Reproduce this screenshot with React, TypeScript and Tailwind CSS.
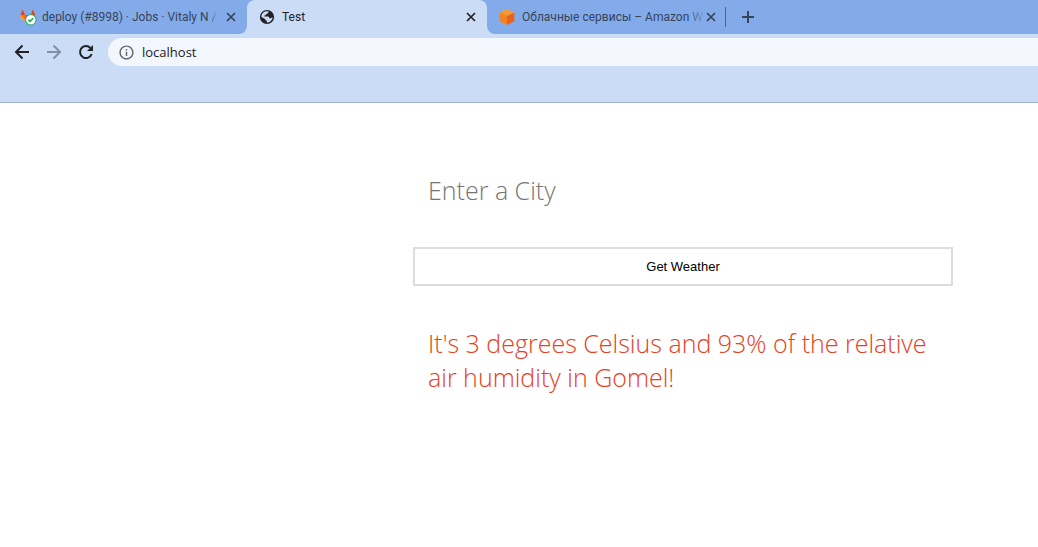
import { useState, type ReactNode } from "react";
import { MdInfoOutline } from "react-icons/md";

function GitlabIcon() {
  return (
    <svg width="18" height="18" viewBox="0 0 18 18" aria-hidden="true" className="-mr-0.5">
      <path d="M3.600 1.600 1.200 8.600 9 15 6 7z" fill="#fc6d26" />
      <path d="M14 1.600 16.600 8.600 9 15 11.800 7z" fill="#fc6d26" />
      <path d="M6 7h6L9 15z" fill="#e24329" />
      <path d="M3.600 1.600 6 7H1.800zM14 1.600 16.200 7h-4.400z" fill="#e24329" />
      <path d="M1.800 7 1.200 9.600 9 15z" fill="#fca326" />
      <circle cx="11.800" cy="11.800" r="5.200" fill="#fff" stroke="#1aaa55" strokeWidth="1" />
      <path d="m9.400 11.800 1.700 1.600 3.100-3.200" fill="none" stroke="#1aaa55" strokeWidth="1.600" />
    </svg>
  );
}

function GlobeIcon() {
  return (
    <svg width="16" height="16" viewBox="0 0 16 16" aria-hidden="true">
      <circle cx="8" cy="8" r="7.1" fill="#202124" />
      <path
        d="M9.600 2.400C9.600 4 8.700 4.700 7.300 4.700 7.200 5.900 6.500 6.500 5.300 6.500v1.100h3.400c1.100 0 1.600.7 1.600 1.700h1.200c.6 0 .9-.4 1-.9h1.100C13.300 11 11 13.500 7.800 13.600V11.600c-1.100 0-1.700-.7-1.700-1.700L2.400 8C2.300 5 4.600 2.300 8 2.300z"
        fill="#cbdcf6"
      />
    </svg>
  );
}

function CubeIcon() {
  return (
    <svg width="16" height="16" viewBox="0 0 16 16" aria-hidden="true">
      <path d="M8 0.3 15.3 3.6 8 7.1 0.7 3.6z" fill="#fb9a2c" />
      <path d="M0.7 3.6 8 7.1v8.8L0.7 12.2z" fill="#f58220" />
      <path d="M15.3 3.6 8 7.1v8.8l7.3-3.7z" fill="#e9631c" />
    </svg>
  );
}

function ReloadIcon() {
  return (
    <svg width="20" height="20" viewBox="0 0 20 20" aria-hidden="true">
      <path d="M15.700 12a6 6 0 1 1-1.300-6.100" fill="none" stroke="currentColor" strokeWidth="2" />
      <path d="M17 3v6h-6z" fill="currentColor" />
    </svg>
  );
}

function LineIcon({ path, size, weight }: { path: string; size: number; weight: number }) {
  return (
    <svg width={size} height={size} viewBox={`0 0 ${size} ${size}`} aria-hidden="true">
      <path d={path} fill="none" stroke="currentColor" strokeWidth={weight} />
    </svg>
  );
}

function Flare({ side }: { side: "left" | "right" }) {
  return (
    <svg
      width="8"
      height="8"
      viewBox="0 0 8 8"
      aria-hidden="true"
      className={side === "left" ? "absolute right-full bottom-0" : "absolute bottom-0 left-full"}
    >
      <path d={side === "left" ? "M8 0v8H0a8 8 0 0 0 8-8z" : "M0 0v8h8a8 8 0 0 1-8-8z"} fill="#cbdcf6" />
    </svg>
  );
}

type TabProps = { icon: ReactNode; title: string; fading?: string; active?: boolean };

function Tab({ icon, title, fading, active = false }: TabProps) {
  return (
    <div
      className={
        active
          ? "relative flex h-full w-60 shrink-0 items-center rounded-t-lg bg-[#cbdcf6] pr-2 pl-3 text-[#202124]"
          : "flex h-full w-60 shrink-0 items-center pr-2 pl-3 text-[#35445c]"
      }
    >
      {active && <Flare side="left" />}
      {active && <Flare side="right" />}
      <span className="shrink-0">{icon}</span>
      <a href="#" className="ml-[7px] min-w-0 flex-1 text-[12px] leading-4 whitespace-pre">
        {title}
        {fading && (
          <span className="bg-gradient-to-r from-[#35445c]/70 to-[#35445c]/15 bg-clip-text text-transparent">{fading}</span>
        )}
      </a>
      <button type="button" aria-label={`Close ${title}`} className="flex size-4 shrink-0 items-center justify-center">
        <LineIcon path="M1 1 9 9M9 1 1 9" size={10} weight={1.7} />
      </button>
    </div>
  );
}

export default function App() {
  const [city, setCity] = useState("");

  return (
    <div className="min-h-screen overflow-x-hidden bg-white font-['Open_Sans','Noto_Sans',sans-serif]">
      <header>
        <nav aria-label="Tabs" className="flex h-[34px] items-center bg-[#84abe9] pl-[7px] font-[Roboto,sans-serif]">
          <Tab icon={<GitlabIcon />} title="deploy (#8998) · Jobs · Vitaly N " fading="/" />
          <Tab icon={<GlobeIcon />} title="Test" active />
          <Tab icon={<CubeIcon />} title="Облачные сервисы – Amazon " fading="W" />
          <span className="-ml-0.5 h-5 w-px shrink-0 bg-[#4a6491]" />
          <button type="button" aria-label="New tab" className="ml-3 flex size-5 items-center justify-center text-[#35445c]">
            <LineIcon path="M6 0v12M0 6h12" size={12} weight={2} />
          </button>
        </nav>
        <div className="h-[69px] border-b border-[#a3b3cd] bg-[#cbdcf6] pt-1">
          <div className="flex h-7 items-center pl-3">
            <button type="button" aria-label="Back" className="text-[#202124]">
              <LineIcon path="M17 10H4M10.5 3.5 4 10l6.5 6.5" size={20} weight={2} />
            </button>
            <button type="button" aria-label="Forward" className="ml-3 text-[#868fa3]">
              <LineIcon path="M3 10h13M9.5 3.5 16 10l-6.5 6.5" size={20} weight={2} />
            </button>
            <button type="button" aria-label="Reload" className="ml-3 text-[#202124]">
              <ReloadIcon />
            </button>
            <label className="ml-3 flex h-7 flex-1 items-center rounded-l-full bg-[#f3f7fd] pl-2.5">
              <MdInfoOutline size={17} className="shrink-0 text-[#5f6368]" />
              <input
                aria-label="Address"
                defaultValue="localhost"
                className="ml-[7px] min-w-0 flex-1 bg-transparent text-[13px] leading-4 text-[#202124] outline-none"
              />
            </label>
          </div>
        </div>
      </header>
      <main className="pt-[60px] pr-4 pl-[413px]">
        <form className="max-w-[540px]" onSubmit={(event) => event.preventDefault()}>
          <input
            aria-label="City"
            placeholder="Enter a City"
            value={city}
            onChange={(event) => setCity(event.target.value)}
            className="block w-full px-[15px] py-[10px] text-[25px] leading-[34px] font-light outline-none placeholder:text-[#757575]"
          />
          <button
            type="submit"
            className="mt-[30px] block h-[39px] w-full border-2 border-[#dddddd] bg-white font-['Liberation_Sans',Arial,sans-serif] text-[13px] text-black"
          >
            Get Weather
          </button>
          <p className="mt-10 px-[15px] text-[25px] leading-[34px] font-light text-[#e8401c]">
            It's 3 degrees Celsius and 93% of the relative air humidity in Gomel!
          </p>
        </form>
      </main>
    </div>
  );
}
